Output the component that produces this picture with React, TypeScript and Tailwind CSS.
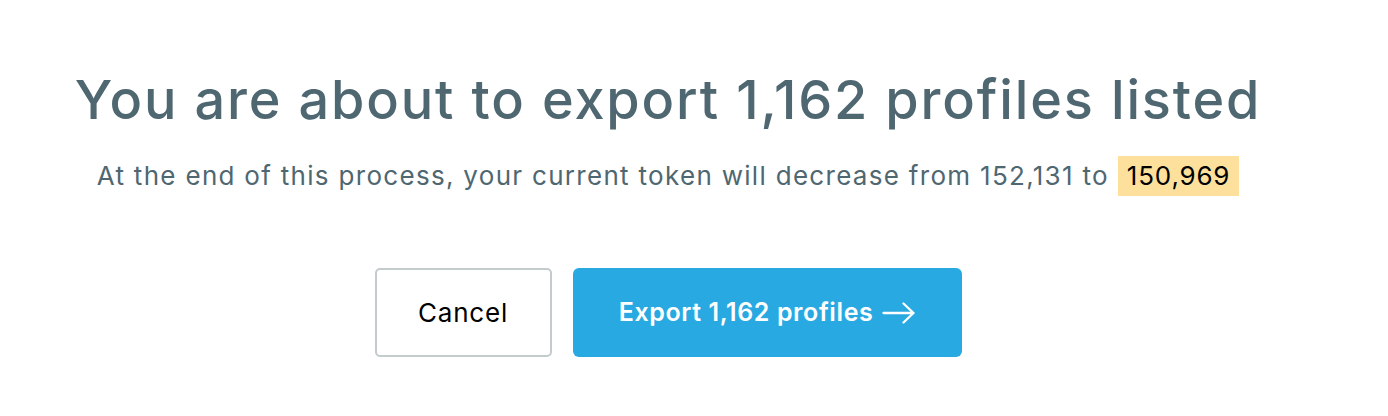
export default function App() {
  return (
    <div className="w-[1336px] h-[416px] bg-white flex flex-col items-center pt-[65px] font-['Inter',sans-serif]">
      <h1 className="text-[54px] leading-[70px] font-medium text-[#4f6771] tracking-[1.85px] whitespace-nowrap">
        You are about to export 1,162 profiles listed
      </h1>
      <p className="mt-[21px] text-[26px] leading-[40px] text-[#4f6771] tracking-[1.3px] flex items-center whitespace-nowrap">
        <span>At the end of this process, your current token will decrease from 152,131 to</span>
        <span className="ml-[9px] bg-[#fde09b] text-black px-[9px] tracking-[0.8px]">150,969</span>
      </p>
      <div className="mt-[72px] flex gap-[21px]">
        <button className="w-[177px] h-[89px] rounded-[5px] border-2 border-[#c3cbcd] bg-white text-[26px] tracking-[0.8px] text-black">
          Cancel
        </button>
        <button className="w-[389px] h-[89px] rounded-[6px] bg-[#29a9e1] text-white text-[25px] tracking-[0.6px] font-semibold flex items-center justify-center gap-[9px]">
          Export 1,162 profiles
          <svg width="33" height="22" viewBox="0 0 33 22" fill="none" stroke="currentColor" strokeWidth="2.3" strokeLinecap="round" strokeLinejoin="round">
            <path d="M1.5 11h30M21.5 1.5l10 9.5-10 9.5" />
          </svg>
        </button>
      </div>
    </div>
  );
}
